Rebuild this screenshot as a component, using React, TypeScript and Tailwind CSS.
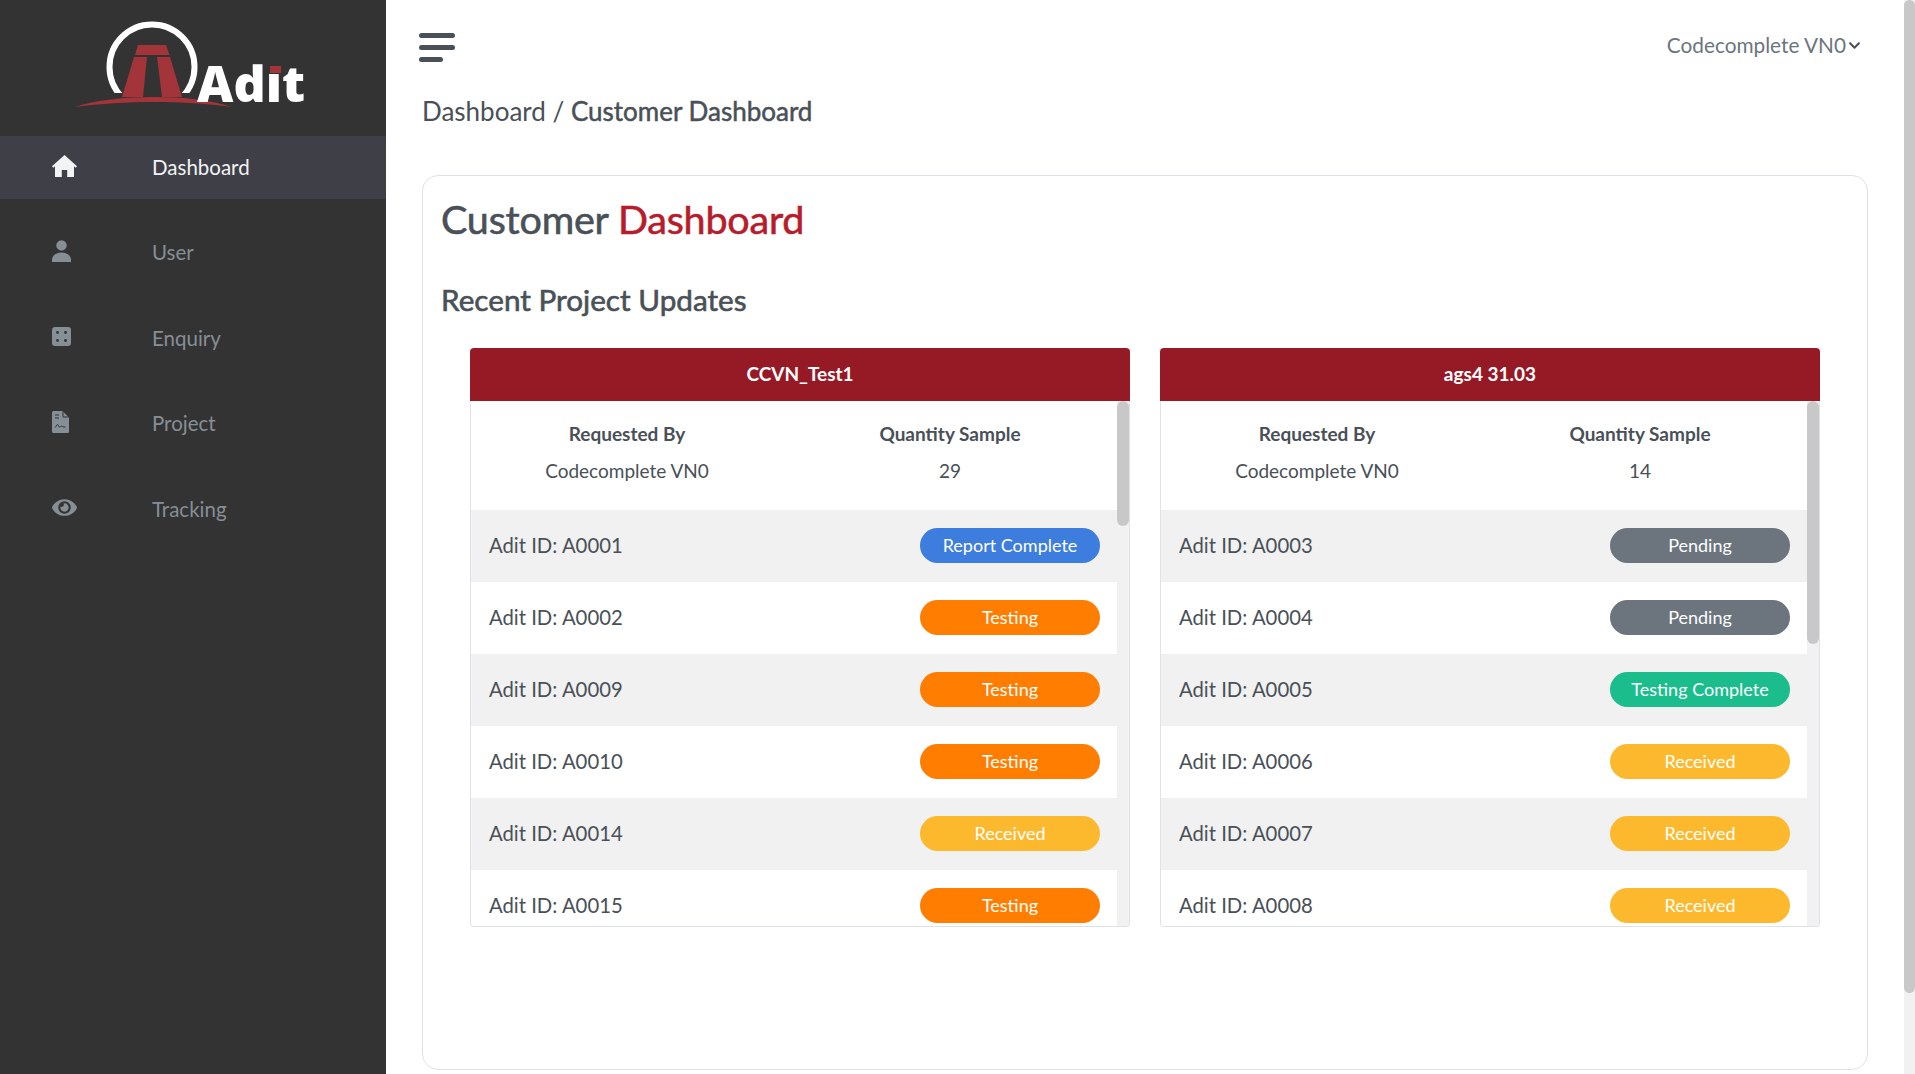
import React from 'react';
import { FaEye, FaChevronDown } from 'react-icons/fa';

type Status = 'Report Complete' | 'Testing' | 'Received' | 'Pending' | 'Testing Complete';

const STATUS_CLASS: Record<Status, string> = {
  'Report Complete': 'bg-[#3c7ddd]',
  Testing: 'bg-[#ff7d00]',
  Received: 'bg-[#fdb92e]',
  Pending: 'bg-[#6c757d]',
  'Testing Complete': 'bg-[#1bbd8c]',
};

const PANELS: {
  title: string;
  quantity: number;
  thumb: string;
  rows: [string, Status][];
}[] = [
  {
    title: 'CCVN_Test1',
    quantity: 29,
    thumb: 'h-[125px]',
    rows: [
      ['A0001', 'Report Complete'],
      ['A0002', 'Testing'],
      ['A0009', 'Testing'],
      ['A0010', 'Testing'],
      ['A0014', 'Received'],
      ['A0015', 'Testing'],
    ],
  },
  {
    title: 'ags4 31.03',
    quantity: 14,
    thumb: 'h-[243px]',
    rows: [
      ['A0003', 'Pending'],
      ['A0004', 'Pending'],
      ['A0005', 'Testing Complete'],
      ['A0006', 'Received'],
      ['A0007', 'Received'],
      ['A0008', 'Received'],
    ],
  },
];

const HomeIcon = () => (
  <svg viewBox="0 0 25 22" className="w-[25px] h-[22px]" fill="currentColor">
    <path d="M12.500 0 25 11.200l-1.300 1.500-1.700-1.400V22h-6.800v-7H9.800v7H3V11.300l-1.700 1.400L0 11.200z" />
  </svg>
);

const UserIcon = () => (
  <svg viewBox="0 0 19 22" className="w-[19px] h-[22px]" fill="currentColor">
    <circle cx="9.5" cy="5.4" r="5.2" />
    <path d="M0 22v-2.2C0 15.6 4.2 12.4 9.5 12.4s9.5 3.2 9.5 7.4V22z" />
  </svg>
);

const EnquiryIcon = () => (
  <svg viewBox="0 0 19 19" className="w-[19px] h-[19px]">
    <rect width="19" height="19" rx="3" fill="currentColor" />
    <g fill="#333333">
      <circle cx="5.5" cy="5.5" r="1.4" />
      <circle cx="13.5" cy="5.5" r="1.4" />
      <circle cx="5.5" cy="13.5" r="1.4" />
      <circle cx="13.5" cy="13.5" r="1.4" />
    </g>
  </svg>
);

const ProjectIcon = () => (
  <svg viewBox="0 0 17 22" className="w-[17px] h-[22px]">
    <path d="M1.5 0H10.5L17 6.5V20.5A1.5 1.5 0 0 1 15.5 22H1.5A1.5 1.5 0 0 1 0 20.5V1.5A1.5 1.5 0 0 1 1.5 0Z" fill="currentColor" />
    <path d="M11 .5V6h5.5" fill="none" stroke="#333333" strokeWidth="1" />
    <path d="M3 4h4M3 7h4M3 16.5c1-.5 1.5-3 2.5-3s.8 2.5 2 2.5 1-1 2-.8 1.5 1 4 .8" fill="none" stroke="#333333" strokeWidth="1" />
  </svg>
);

const NAV_ITEMS = [
  { label: 'Dashboard', icon: <HomeIcon /> },
  { label: 'User', icon: <UserIcon /> },
  { label: 'Enquiry', icon: <EnquiryIcon /> },
  { label: 'Project', icon: <ProjectIcon /> },
  { label: 'Tracking', icon: <FaEye className="w-[25px] h-[25px]" /> },
];

const Logo = () => (
  <svg viewBox="0 0 386 136" className="w-[386px] h-[136px]">
    <circle cx="152" cy="67" r="42.5" fill="none" stroke="#ffffff" strokeWidth="6" />
    <path d="M100 116h108V93H100z" fill="#333333" />
    <path d="M122 97l12-40h13l-4 40z" fill="#a3343a" />
    <path d="M182 97l-12-40h-13l5 40z" fill="#a3343a" />
    <path d="M138 45h28l3.500 10h-34.500z" fill="#a3343a" />
    <path d="M75 107c20-7 50-10 80-10s55 3 77 10c-25-3.500-50-5-77-5s-55 1.500-80 5z" fill="#a3343a" />
    <text
      x="197"
      y="102"
      textLength="108"
      lengthAdjust="spacingAndGlyphs"
      fill="#ffffff"
      className="[font-family:'Open_Sans',sans-serif] font-extrabold text-[50px]"
    >
      Adit
    </text>
    <rect x="268" y="58" width="15" height="16" fill="#333333" />
    <rect x="270" y="66" width="11" height="7" fill="#a3343a" />
  </svg>
);

const Sidebar = () => (
  <aside className="w-[386px] shrink-0 bg-[#333333] text-[#868e96]">
    <Logo />
    <nav className="flex flex-col gap-[22.5px]">
      {NAV_ITEMS.map((item, i) => (
        <div
          key={item.label}
          className={`flex items-center h-[63px] pl-[52px] ${i === 0 ? 'bg-[#3f4047] text-[#f1f3f5]' : ''}`}
        >
          <span className="w-[100px] -mt-1">{item.icon}</span>
          <span className="text-[20.5px] -mt-px">{item.label}</span>
        </div>
      ))}
    </nav>
  </aside>
);

const Panel = ({ panel }: { panel: (typeof PANELS)[number] }) => (
  <div className="w-[660px] h-[579px] flex flex-col">
    <div className="h-[53px] shrink-0 rounded-t-[4px] flex items-center justify-center bg-[#961a25] text-white font-bold text-[19px]">
      {panel.title}
    </div>
    <div className="flex-1 flex min-h-0 rounded-b-[4px] border-x border-b border-[#dee2e6] overflow-hidden">
      <div className="flex-1 min-w-0 overflow-hidden">
        <div className="h-[109px] grid grid-cols-[312px_1fr] content-start pt-[19px] text-center text-[19px] text-[#495057]">
          <div className="font-bold leading-[27px]">Requested By</div>
          <div className="font-bold leading-[27px]">Quantity Sample</div>
          <div className="leading-[27px] mt-[10px]">Codecomplete VN0</div>
          <div className="leading-[27px] mt-[10px]">{panel.quantity}</div>
        </div>
        {panel.rows.map(([id, status], i) => (
          <div
            key={id}
            className={`h-[72px] pb-[2px] flex items-center justify-between pl-[18px] pr-[17px] text-[20.3px] text-[#495057] ${i % 2 === 0 ? 'bg-[#f1f1f1]' : 'bg-white'}`}
          >
            <span>Adit ID: {id}</span>
            <span className={`w-[180px] h-[35px] rounded-full flex items-center justify-center text-white text-[18px] ${STATUS_CLASS[status]}`}>
              {status}
            </span>
          </div>
        ))}
      </div>
      <div className="w-3 shrink-0 bg-[#f1f1f1]">
        <div className={`rounded-md bg-[#c8c8c8] ${panel.thumb}`} />
      </div>
    </div>
  </div>
);

export default function App() {
  return (
    <div className="flex h-screen overflow-hidden bg-white [font-family:Lato,sans-serif]">
      <Sidebar />
      <main className="flex-1 min-w-0 pl-[36px] pr-[36px]">
        <div className="flex items-start justify-between h-[175px]">
          <div>
            <div className="flex flex-col items-start gap-[7px] pt-[33px] -ml-[3px]">
              <span className="block w-9 h-[5px] rounded-full bg-[#495057]" />
              <span className="block w-9 h-[5px] rounded-full bg-[#495057]" />
              <span className="block w-6 h-[5px] rounded-full bg-[#495057]" />
            </div>
            <div className="mt-[31px] text-[26px] leading-[36px] text-[#495057]">
              Dashboard / <span className="[-webkit-text-stroke:0.5px_#495057]">Customer Dashboard</span>
            </div>
          </div>
          <div className="flex items-center gap-[2px] pt-[30px] pr-[7px] text-[20.8px] leading-[30px] text-[#6c757d]">
            Codecomplete VN0
            <FaChevronDown className="w-[13px] h-[13px] text-[#495057]" />
          </div>
        </div>
        <section className="h-[895px] rounded-[16px] border border-[#dee2e6] px-[18px]">
          <h1 className="pt-[19px] text-[39.5px] tracking-[-0.2px] leading-[48px] font-normal text-[#495057] [-webkit-text-stroke:0.6px]">
            Customer <span className="text-[#b71c2c]">Dashboard</span>
          </h1>
          <h2 className="mt-[39px] text-[29.7px] leading-[36px] font-normal text-[#495057] [-webkit-text-stroke:0.6px]">Recent Project Updates</h2>
          <div className="flex gap-[30px] mt-[30px] ml-[29px]">
            {PANELS.map((panel) => (
              <Panel key={panel.title} panel={panel} />
            ))}
          </div>
        </section>
      </main>
      <div className="w-[11px] shrink-0 bg-[#f1f1f1]">
        <div className="h-[993px] rounded-md bg-[#c8c8c8]" />
      </div>
    </div>
  );
}
